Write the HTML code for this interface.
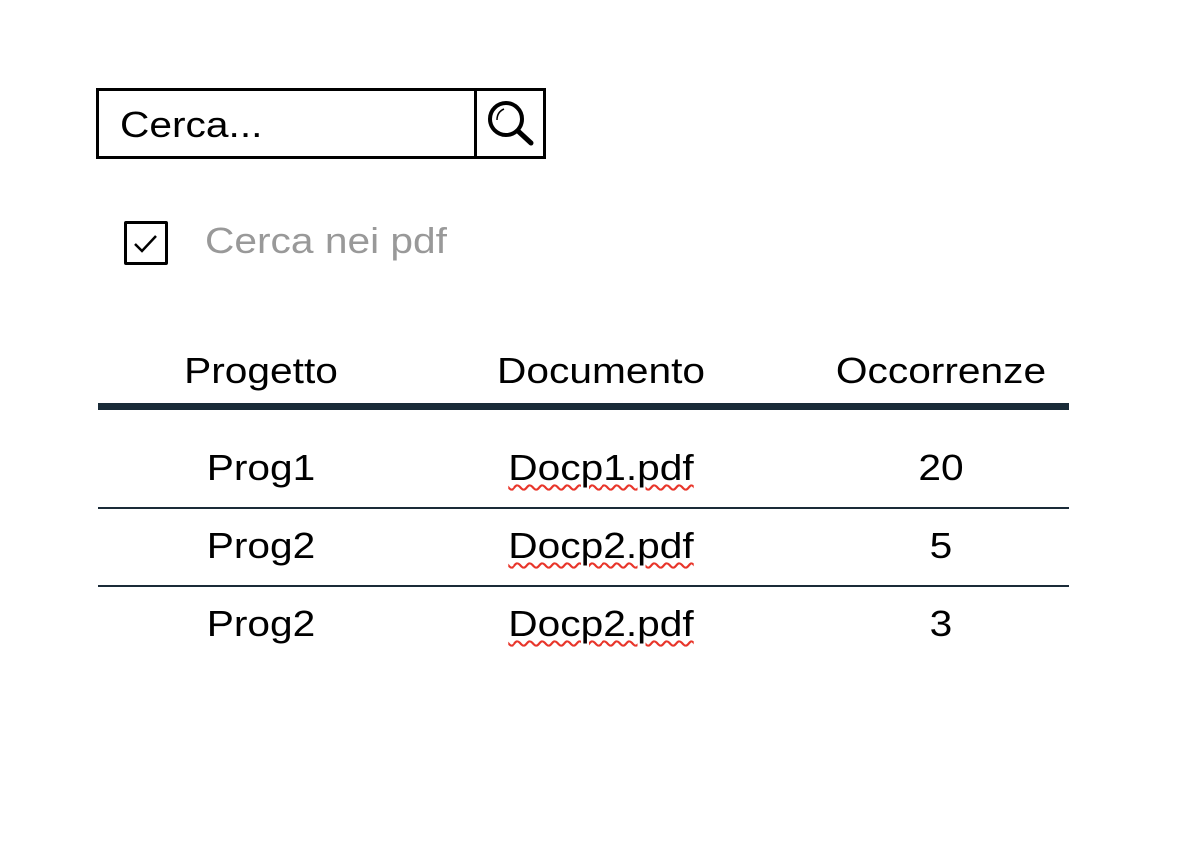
<!DOCTYPE html>
<html><head><meta charset="utf-8"><style>
body{margin:0;width:1184px;height:848px;background:#fff;position:relative;font-family:"Liberation Sans",Arial,sans-serif;overflow:hidden}
.a{position:absolute}
.s{position:absolute;font-size:36px;line-height:40px;transform-origin:0 0;transform:scaleX(1.13);white-space:nowrap}
.t{position:absolute;font-size:36px;line-height:40px;color:#000;transform:translateX(-50%) scaleX(1.13);white-space:nowrap}
.w{text-decoration:underline wavy #e8352a;text-decoration-thickness:2px;text-underline-offset:4px}
</style></head><body>
<div class="a" style="left:96px;top:88px;width:444px;height:65px;border:3px solid #000"></div>
<div class="a" style="left:474px;top:89px;width:3px;height:69px;background:#000"></div>
<div class="s" style="left:120px;top:105px">Cerca...</div>
<svg class="a" style="left:484px;top:98px" width="54" height="52" viewBox="0 0 54 52">
<circle cx="22" cy="21" r="16" fill="none" stroke="#000" stroke-width="4"/>
<path d="M34 33 L47 45" stroke="#000" stroke-width="5" stroke-linecap="round"/>
<path d="M13 22 Q13 14 20 11" fill="none" stroke="#000" stroke-width="1.5"/>
</svg>
<div class="a" style="left:124px;top:221px;width:38px;height:38px;border:3px solid #000;border-radius:2px"></div>
<svg class="a" style="left:125px;top:222px" width="42" height="42"><path d="M10 22 L17 29 L31 14" fill="none" stroke="#000" stroke-width="2.5"/></svg>
<div class="s" style="left:205px;top:221px;color:#999">Cerca nei pdf</div>

<div class="t" style="left:261px;top:351px">Progetto</div>
<div class="t" style="left:601px;top:351px">Documento</div>
<div class="t" style="left:941px;top:351px">Occorrenze</div>
<div class="a" style="left:98px;top:403px;width:971px;height:7px;background:#1a2b38"></div>

<div class="t" style="left:261px;top:448px">Prog1</div>
<div class="t w" style="left:601px;top:448px">Docp1.pdf</div>
<div class="t" style="left:941px;top:448px">20</div>
<div class="a" style="left:98px;top:507px;width:971px;height:2px;background:#1a2b38"></div>

<div class="t" style="left:261px;top:526px">Prog2</div>
<div class="t w" style="left:601px;top:526px">Docp2.pdf</div>
<div class="t" style="left:941px;top:526px">5</div>
<div class="a" style="left:98px;top:585px;width:971px;height:2px;background:#1a2b38"></div>

<div class="t" style="left:261px;top:604px">Prog2</div>
<div class="t w" style="left:601px;top:604px">Docp2.pdf</div>
<div class="t" style="left:941px;top:604px">3</div>
</body></html>
